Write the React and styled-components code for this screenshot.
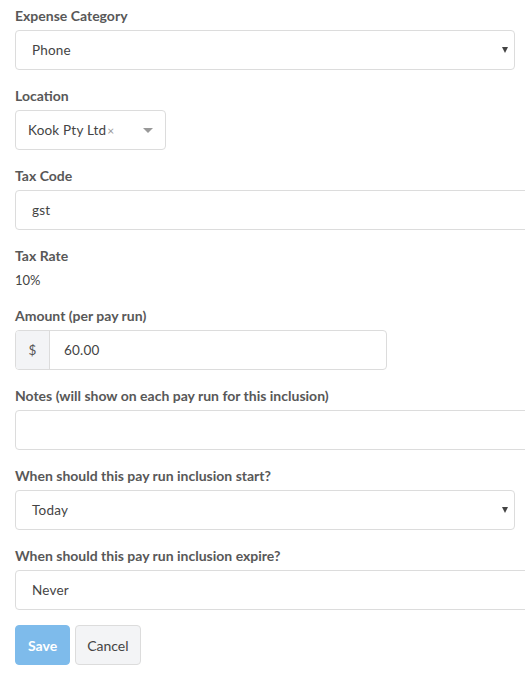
import * as React from "react";
import styled, { createGlobalStyle } from "styled-components";

const GlobalStyle = createGlobalStyle`
    html, body {
        margin: 0;
        padding: 0;
        background: #fff;
        overflow: hidden;
    }
    body {
        font-family: Lato, "Open Sans", Arial, sans-serif;
        color: #444;
    }
`;

const Form = styled.form`
    width: 560px;
    padding: 6px 15px 0 15px;
    box-sizing: border-box;
`;

const Group = styled.div`
    margin-bottom: ${p => (p.tight ? "15px" : "16px")};
`;

const Label = styled.label`
    display: block;
    font-size: 14px;
    font-weight: 700;
    line-height: 20px;
    color: #585858;
    margin-bottom: 4px;
`;

const Static = styled.div`
    font-size: 13px;
    line-height: 20px;
    color: #444;
`;

const Field = styled.div`
    position: relative;
    display: flex;
    align-items: center;
    width: ${p => p.width || "100%"};
    height: 40px;
    box-sizing: border-box;
    border: 1px solid #dcdcdc;
    border-radius: 4px;
    background: #fff;
    padding: 0 ${p => (p.compact ? "12px" : "16px")};
    font-size: 13.5px;
    letter-spacing: 0.2px;
    color: #444;
`;

const Arrow = styled.span`
    margin-left: auto;
    margin-right: -10px;
    width: 0;
    height: 0;
    border-left: 3.5px solid transparent;
    border-right: 3.5px solid transparent;
    border-top: 6px solid #444;
`;

const Caret = styled.span`
    margin-left: auto;
    margin-right: 0;
    width: 0;
    height: 0;
    border-left: 5px solid transparent;
    border-right: 5px solid transparent;
    border-top: 5px solid #999;
`;

const Clear = styled.span`
    font-size: 12px;
    color: #999;
    margin-left: 1px;
`;

const InputGroup = styled.div`
    display: flex;
    width: 372px;
    height: 40px;
    box-sizing: border-box;
    border: 1px solid #dcdcdc;
    border-radius: 4px;
    overflow: hidden;
`;

const Addon = styled.span`
    width: 33px;
    display: flex;
    align-items: center;
    justify-content: center;
    background: #f3f4f6;
    border-right: 1px solid #dcdcdc;
    font-size: 13.5px;
    color: #555;
`;

const AddonValue = styled.span`
    display: flex;
    align-items: center;
    padding-left: 14px;
    font-size: 13.5px;
    letter-spacing: 0.2px;
    color: #444;
`;

const Actions = styled.div`
    display: flex;
    gap: 5px;
`;

const Button = styled.button`
    height: 40px;
    box-sizing: border-box;
    padding: 0 ${p => (p.primary ? "12px" : "11px")};
    border-radius: 4px;
    font-family: inherit;
    font-size: 14px;
    font-weight: ${p => (p.primary ? 700 : 400)};
    color: ${p => (p.primary ? "#fff" : "#444")};
    background: ${p => (p.primary ? "#7ebbeb" : "#f3f4f6")};
    border: 1px solid ${p => (p.primary ? "#7ebbeb" : "#dcdcdc")};
`;

export default function App() {
    return (
        <>
            <GlobalStyle />
            <Form>
                <Group>
                    <Label>Expense Category</Label>
                    <Field width="500px">Phone<Arrow /></Field>
                </Group>
                <Group>
                    <Label>Location</Label>
                    <Field width="151px" compact>
                        Kook Pty Ltd<Clear>×</Clear><Caret />
                    </Field>
                </Group>
                <Group>
                    <Label>Tax Code</Label>
                    <Field>gst</Field>
                </Group>
                <Group>
                    <Label>Tax Rate</Label>
                    <Static>10%</Static>
                </Group>
                <Group>
                    <Label>Amount (per pay run)</Label>
                    <InputGroup>
                        <Addon>$</Addon>
                        <AddonValue>60.00</AddonValue>
                    </InputGroup>
                </Group>
                <Group>
                    <Label>Notes (will show on each pay run for this inclusion)</Label>
                    <Field />
                </Group>
                <Group>
                    <Label>When should this pay run inclusion start?</Label>
                    <Field width="500px">Today<Arrow /></Field>
                </Group>
                <Group tight>
                    <Label>When should this pay run inclusion expire?</Label>
                    <Field>Never</Field>
                </Group>
                <Actions>
                    <Button type="button" primary>Save</Button>
                    <Button type="button">Cancel</Button>
                </Actions>
            </Form>
        </>
    );
}
